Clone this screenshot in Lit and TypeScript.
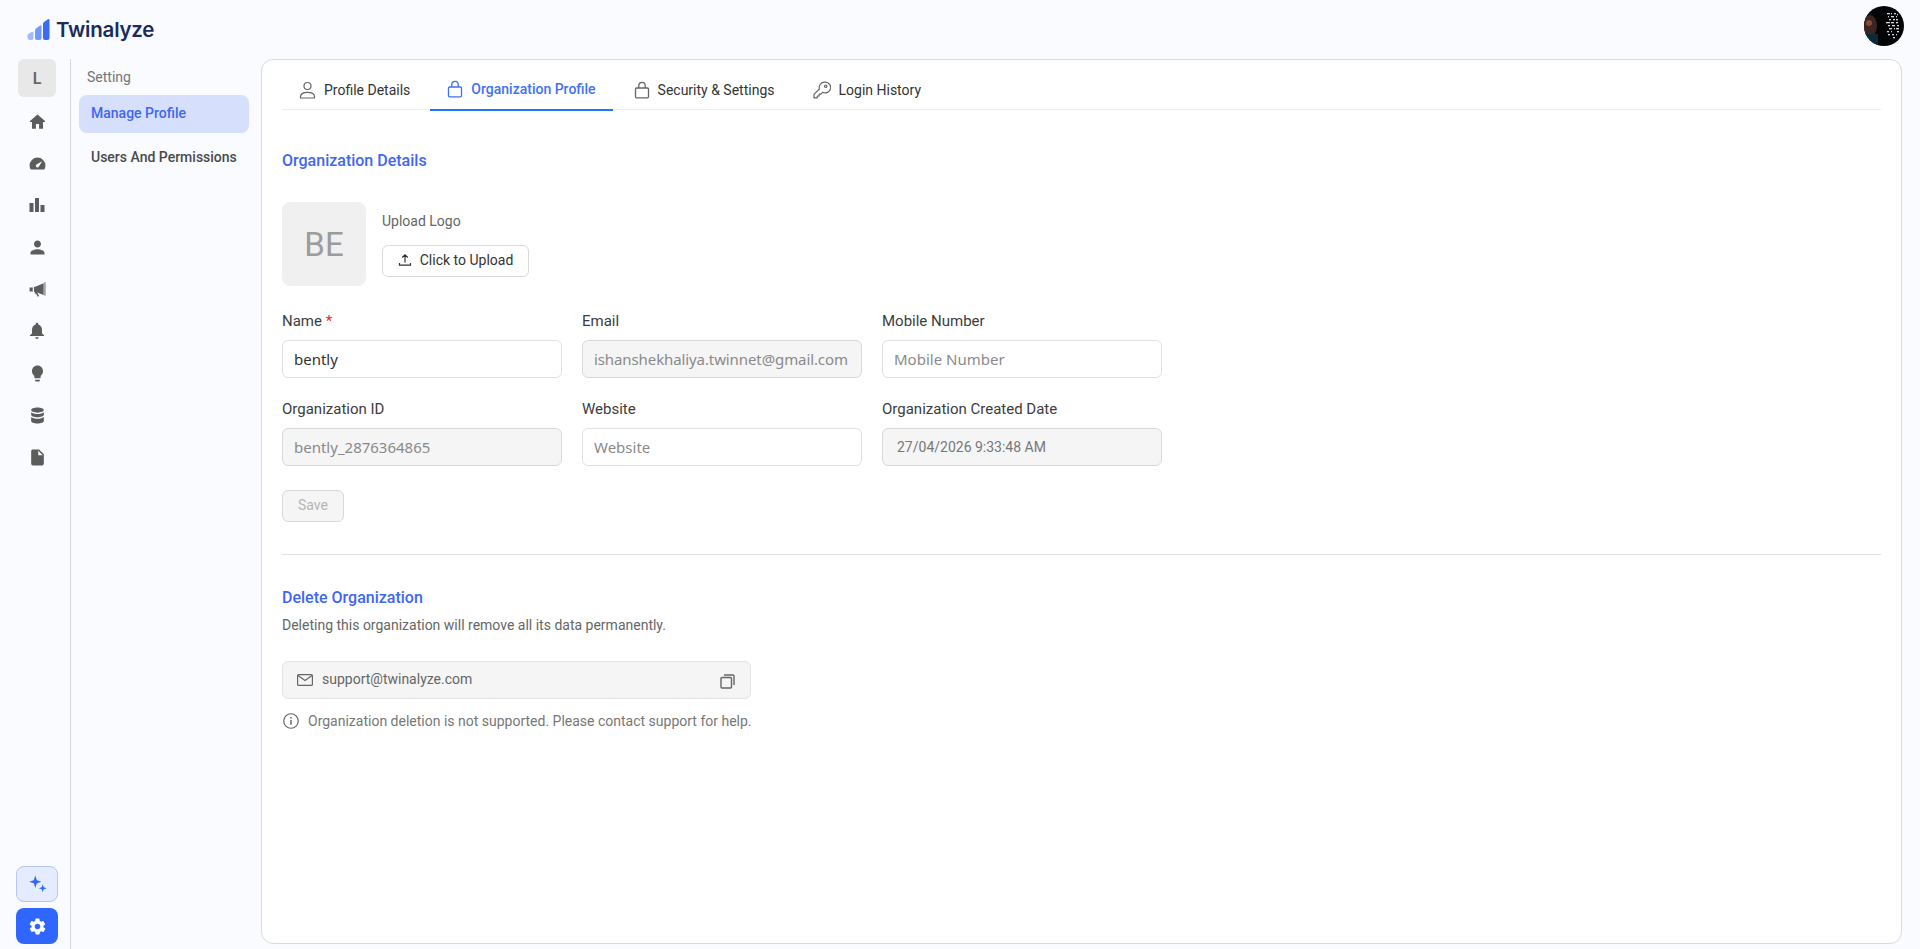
import { LitElement, html, css, svg } from "lit";
import { customElement } from "lit/decorators.js";

const railIcons = [
  { s: 19, d: "M12 3l9.500 8.500v1H19V21h-5v-6h-4v6H5v-8.500H2.500v-1z" },
  { s: 19, d: "M12 4.500a10 10 0 0 0-10 10c0 1.900.5 3.600 1.400 5h17.200c.9-1.400 1.400-3.100 1.400-5a10 10 0 0 0-10-10zm5.900 4.600l-4.300 6.900a2 2 0 1 1-2.900-2.700z" },
  { s: 24, d: "M4.500 10h4v9h-4zM10 5h4v14h-4zm5.500 7h4v7h-4z" },
  { s: 21, d: "M12 12c2.210 0 4-1.790 4-4s-1.790-4-4-4-4 1.790-4 4 1.790 4 4 4zm0 2c-2.670 0-8 1.340-8 4v2h16v-2c0-2.660-5.330-4-8-4z" },
  { s: 19, d: "M22 2.500v17l-1.200.3V3.200zM19.800 4v14.800L11.500 15.700V16.500h.6l1.900 3.800-1.700 1-2.100-3.900-1.700-.2V15l-1-.3V9.300zM2 9.500h4v5H2z" },
  { s: 20, d: "M12 21.500c1.100 0 2-.9 2-2h-4c0 1.100.9 2 2 2zm6-6.500v-4.500c0-3.070-1.640-5.640-4.500-6.320V3.500c0-.83-.67-1.500-1.500-1.500s-1.500.67-1.500 1.500v.68C7.630 4.860 6 7.420 6 10.500V15l-2.500 2v1h17v-1z" },
  { s: 19, d: "M9 21c0 .55.45 1 1 1h4c.55 0 1-.45 1-1v-1H9v1zm3-19C8.140 2 5 5.140 5 9c0 2.380 1.190 4.470 3 5.740V17c0 .55.45 1 1 1h6c.55 0 1-.45 1-1v-2.260c1.810-1.270 3-3.360 3-5.740 0-3.860-3.140-7-7-7z" },
  { s: 19, d: "M12 2C7.600 2 4 3.400 4 5.200S7.600 8.400 12 8.400s8-1.400 8-3.200S16.400 2 12 2zM4 8v3c0 1.800 3.600 3.200 8 3.200s8-1.400 8-3.200V8c-1.700 1.500-4.800 2.200-8 2.200S5.700 9.500 4 8zm0 6v4.800C4 20.600 7.600 22 12 22s8-1.400 8-3.200V14c-1.700 1.500-4.800 2.200-8 2.200S5.700 15.500 4 14z" },
  { s: 19, d: "M6 2c-1.100 0-1.990.9-1.990 2L4 20c0 1.100.89 2 1.990 2H18c1.100 0 2-.9 2-2V8l-6-6H6zm7 7V3.500L18.500 9H13z" },
];

const rail = (i: { s: number; d: string }) => html`
  <div class="rail-item">
    <svg width=${i.s} height=${i.s} viewBox="0 0 24 24" fill="currentColor"><path d=${i.d}></path></svg>
  </div>`;

const lock = html`<svg class="tab-ico" width="16" height="18" viewBox="0 0 16 18" fill="none" stroke="currentColor" stroke-width="1.300"><rect x="1.500" y="7" width="13" height="9.800" rx="1"></rect><path d="M4.800 7V4.500a3.200 3.200 0 0 1 6.400 0V7"></path></svg>`;
const person = html`<svg class="tab-ico" width="17" height="18" viewBox="0 0 17 18" fill="none" stroke="currentColor" stroke-width="1.200"><circle cx="8.500" cy="5" r="3.500"></circle><path d="M1.500 17v-1.500c0-2.700 3-4.200 7-4.200s7 1.500 7 4.200V17z"></path></svg>`;
const key = html`<svg class="tab-ico" width="18" height="18" viewBox="0 0 18 18" fill="none" stroke="currentColor" stroke-width="1.200" stroke-linejoin="round"><path d="M11.500 1.200a5.300 5.300 0 0 0-5.100 6.800L1 13.400v3.400h3.300v-1.800h1.800v-1.800h1.800l2-2a5.300 5.300 0 1 0 2.600-10z"></path><circle cx="12.700" cy="5.200" r="1.200"></circle></svg>`;

/* avatar: a dark photograph with small bright specks; drawn as abstract pixels */
const specks: [number, number, number][] = [
  [23,7,3],[27,7,1],[30,7,2],[33,8,1],[24,10,1],[27,10,3],[32,10,1],[25,13,2],[29,13,2],[32,13,2],[22,16,4],[27,16,3],[32,16,2],[24,19,2],[28,19,3],[33,19,2],[25,22,3],[30,22,1],[32,22,3],[23,25,2],[27,25,1],[33,25,2],[24,28,2],[28,28,2],[32,28,1],[29,31,2],
];
const avatar = html`<svg class="avatar" width="40" height="40" viewBox="0 0 40 40">
  <defs><clipPath id="av"><circle cx="20" cy="20" r="20"></circle></clipPath></defs>
  <g clip-path="url(#av)">
    <rect width="40" height="40" fill="#040507"></rect>
    <ellipse cx="6" cy="20" rx="7" ry="11" fill="#3a2520"></ellipse>
    <ellipse cx="5" cy="17" rx="3" ry="3" fill="#8a4a30"></ellipse>
    <rect x="0" y="28" width="14" height="12" fill="#0c2a3a"></rect>
    ${specks.map(([x, y, w]) => svg`<rect x=${x} y=${y} width=${w} height="1.300" fill="#d8d8d8"></rect>`)}
  </g>
</svg>`;

@customElement("app-root")
export class AppRoot extends LitElement {
  static styles = css`
    :host { display: flex; flex-direction: column; height: 100vh; background: #f9fbfe; font-family: Roboto, "Liberation Sans", sans-serif; font-size: 14px; color: #333; overflow: hidden; }
    * { box-sizing: border-box; }
    .top { height: 59px; flex: none; display: flex; align-items: center; justify-content: space-between; padding: 0 16px 0 27px; }
    .brand { display: flex; align-items: center; gap: 6px; }
    .brand-name { font-family: Inter, sans-serif; font-weight: 600; font-size: 20.500px; color: #1a2b5c; letter-spacing: -0.2px; line-height: 28px; }
    .avatar { display: block; margin-top: -7px; }
    .body { flex: 1; display: flex; min-height: 0; }
    .rail { width: 71px; flex: none; border-right: 1px solid #d3d6da; padding: 0 13px 5px 17px; display: flex; flex-direction: column; align-items: center; justify-content: space-between; }
    .rail-top { display: flex; flex-direction: column; align-items: center; gap: 4px; }
    .rail-l { width: 38px; height: 38px; margin-bottom: 1px; border-radius: 6px; background: #e8e8e8; color: #666; display: flex; align-items: center; justify-content: center; font-weight: 600; font-size: 16px; }
    .rail-item { width: 38px; height: 38px; display: flex; align-items: center; justify-content: center; color: #5c5c5c; }
    .rail-bottom { display: flex; flex-direction: column; gap: 6px; }
    .rb { width: 42px; height: 36px; border-radius: 8px; display: flex; align-items: center; justify-content: center; }
    .rb.spark { background: #e6ecff; border: 1px solid #b5c6f7; color: #2f66ff; }
    .rb.gear { background: #2f66ff; color: #fff; }
    .sub { width: 190px; flex: none; padding: 8px 12px 0 8px; }
    .sub-title { line-height: 20px; padding-left: 8px; color: #757575; margin-bottom: 8px; }
    .sub-item { height: 38px; border-radius: 8px; padding: 0 12px 2px; display: flex; align-items: center; font-weight: 500; color: #4a4a4a; margin-bottom: 6px; white-space: nowrap; }
    .sub-item.on { background: #d6e0fd; color: #3f66f5; }
    .card { flex: 1; margin: 0 18px 5px 0; background: #fff; border: 1px solid #d9dbde; border-radius: 12px; padding: 0 20px; min-width: 0; }
    .tabs { display: flex; gap: 4px; height: 50px; border-bottom: 1px solid #eeeeee; }
    .tab { height: 51px; padding: 9px 17px 0; display: flex; align-items: center; gap: 8px; color: #333; white-space: nowrap; }
    .tab:first-child { padding-right: 16px; }
    .tab-ico { color: #666; flex: none; }
    .tab.on { color: #3f72f5; border-bottom: 2px solid #1f75fe; font-weight: 500; }
    .tab.on .tab-ico { color: #3f72f5; }
    .title { font-size: 16px; font-weight: 500; line-height: 22px; color: #3f66f5; }
    .t1 { margin-top: 40px; margin-bottom: 30px; }
    .upload { display: flex; align-items: center; gap: 16px; margin-bottom: 24px; }
    .logo { width: 84px; height: 84px; border-radius: 8px; background: #f0f0f0; color: #9c9c9c; font-size: 33px; font-weight: 400; display: flex; align-items: center; justify-content: center; }
    .upload-label { font-size: 14px; line-height: 20px; color: #666; margin-bottom: 14px; }
    .btn { width: 147px; height: 32px; padding-bottom: 2px; border: 1px solid #d9d9d9; border-radius: 6px; background: #fff; display: flex; align-items: center; justify-content: center; gap: 8px; color: #333; font-size: 14px; }
    .form { display: grid; grid-template-columns: repeat(3, 280px); gap: 20px; }
    .f label { display: block; font-size: 15px; line-height: 20px; padding-top: 1px; height: 21px; margin-bottom: 9px; color: #3c3c3c; }
    .req { color: #f5222d; }
    .f input { display: block; width: 100%; height: 38px; border: 1px solid #e0e0e0; border-radius: 6px; padding: 0 11px; font-family: "Noto Sans", Roboto, sans-serif; font-size: 15px; color: #333; background: #fff; outline: none; }
    .f input::placeholder { color: #8a8a8a; opacity: 1; }
    .f input:disabled { background: #f5f5f5; color: #8a8a8a; border-color: #d9d9d9; }
    .f input.em { letter-spacing: -0.1px; }
    .f input.date { font-family: Roboto, sans-serif; font-size: 14px; padding: 0 14px 1px; color: #777; }
    .save { width: 62px; height: 32px; margin-top: 24px; padding-bottom: 2px; border: 1px solid #d9d9d9; border-radius: 6px; background: #f5f5f5; color: #b5b5b5; font-size: 14px; display: flex; align-items: center; justify-content: center; }
    .div { height: 1px; background: #e0e0e0; margin: 32px 0; }
    .desc { line-height: 20px; font-size: 14px; color: #666; margin-top: 6px; }
    .support { width: 469px; height: 38px; margin-top: 26px; background: #f5f5f5; border: 1px solid #e3e3e3; border-radius: 6px; padding: 0 15px 0 14px; display: flex; align-items: center; color: #666; }
    .support span { margin: 0 0 2px 9px; flex: 1; }
    .support .copy { margin-top: 3px; }
    .note { width: 469px; margin-top: 12px; line-height: 20px; display: flex; align-items: center; gap: 9px; color: #777; white-space: nowrap; }
    .note svg { flex: none; margin-left: 1px; }
  `;

  render() {
    return html`
      <header class="top">
        <div class="brand">
          <svg width="23" height="22" viewBox="0 0 23 22">
            <path d="M.5 17q0-1.500 1-2.200l3-1.800q2-1 2 1v5q0 2-2 2h-1q-3 0-3-3z" fill="#a0baff"></path>
            <path d="M8 11.500q0-1.200 1-2l4-3q1.500-1 1.500.8V19q0 2-2 2H10q-2 0-2-2z" fill="#7098ff"></path>
            <path d="M16 5q0-1.200 1-2l4-2.700q1.500-.8 1.500.8V19q0 2-2 2H18q-2 0-2-2z" fill="#3a6bf5"></path>
          </svg>
          <span class="brand-name">Twinalyze</span>
        </div>
        ${avatar}
      </header>
      <div class="body">
        <nav class="rail">
          <div class="rail-top">
            <div class="rail-l">L</div>
            ${railIcons.map(rail)}
          </div>
          <div class="rail-bottom">
            <div class="rb spark">
              <svg width="20" height="20" viewBox="0 0 20 20" fill="currentColor"><path d="M8.300 1.500l1.500 4.700 4.700 1.500-4.700 1.500-1.500 4.700-1.500-4.700L2.100 7.700l4.700-1.500zM15.700 10.300l1 3 3 1-3 1-1 3-1-3-3-1 3-1z"></path></svg>
            </div>
            <div class="rb gear">
              <svg width="19" height="19" viewBox="0 0 24 24" fill="currentColor"><path fill-rule="evenodd" d="M19.400 13c.1-.3.100-.7.100-1s0-.7-.1-1l2.100-1.600c.2-.2.200-.4.100-.6l-2-3.500c-.1-.2-.4-.3-.6-.2l-2.500 1c-.5-.4-1.100-.7-1.700-1l-.4-2.700c0-.2-.2-.4-.5-.4h-4c-.3 0-.5.200-.5.400l-.4 2.700c-.6.300-1.200.6-1.700 1l-2.500-1c-.2-.1-.5 0-.6.200l-2 3.500c-.1.200-.1.400.1.600L4.600 11c-.1.300-.1.700-.1 1s0 .7.100 1l-2.100 1.600c-.2.200-.2.400-.1.600l2 3.500c.1.200.4.300.6.200l2.500-1c.5.400 1.100.7 1.700 1l.4 2.700c0 .2.200.4.500.4h4c.3 0 .5-.2.500-.4l.4-2.700c.6-.3 1.200-.6 1.700-1l2.500 1c.2.100.5 0 .6-.2l2-3.500c.1-.2.100-.4-.1-.6zM12 15.500a3.500 3.500 0 1 1 0-7 3.500 3.500 0 0 1 0 7z"></path></svg>
            </div>
          </div>
        </nav>
        <aside class="sub">
          <div class="sub-title">Setting</div>
          <div class="sub-item on">Manage Profile</div>
          <div class="sub-item">Users And Permissions</div>
        </aside>
        <main class="card">
          <div class="tabs">
            <div class="tab">${person}Profile Details</div>
            <div class="tab on">${lock}Organization Profile</div>
            <div class="tab">${lock}Security &amp; Settings</div>
            <div class="tab">${key}Login History</div>
          </div>
          <div class="title t1">Organization Details</div>
          <div class="upload">
            <div class="logo">BE</div>
            <div>
              <div class="upload-label">Upload Logo</div>
              <div class="btn">
                <svg width="14" height="14" viewBox="0 0 14 14" fill="none" stroke="#333" stroke-width="1.200"><path d="M7 9.500V2M4.200 4.500L7 1.800l2.800 2.700M1.500 10v2.200h11V10"></path></svg>
                Click to Upload
              </div>
            </div>
          </div>
          <div class="form">
            <div class="f"><label>Name <span class="req">*</span></label><input .value=${"bently"} /></div>
            <div class="f"><label>Email</label><input class="em" disabled .value=${"ishanshekhaliya.twinnet@gmail.com"} /></div>
            <div class="f"><label>Mobile Number</label><input placeholder="Mobile Number" /></div>
            <div class="f"><label>Organization ID</label><input disabled .value=${"bently_2876364865"} /></div>
            <div class="f"><label>Website</label><input placeholder="Website" /></div>
            <div class="f"><label>Organization Created Date</label><input class="date" disabled .value=${"27/04/2026 9:33:48 AM"} /></div>
          </div>
          <div class="save">Save</div>
          <div class="div"></div>
          <div class="title">Delete Organization</div>
          <div class="desc">Deleting this organization will remove all its data permanently.</div>
          <div class="support">
            <svg width="16" height="12" viewBox="0 0 16 12" fill="none" stroke="#666" stroke-width="1.200"><rect x=".6" y=".6" width="14.800" height="10.800" rx="1"></rect><path d="M1 1.500l7 5 7-5"></path></svg>
            <span>support@twinalyze.com</span>
            <svg class="copy" width="15" height="15" viewBox="0 0 15 15" fill="none" stroke="#666" stroke-width="1.400"><rect x="1" y="3.500" width="10.500" height="10.500" rx="1"></rect><path d="M4 1h9a1 1 0 0 1 1 1v9"></path></svg>
          </div>
          <div class="note">
            <svg width="16" height="16" viewBox="0 0 15 15" fill="none" stroke="#666" stroke-width="1.100"><circle cx="7.500" cy="7.500" r="6.800"></circle><path d="M7.500 6.500v4.500" stroke-width="1.400"></path><circle cx="7.500" cy="4.500" r=".8" fill="#666" stroke="none"></circle></svg>
            Organization deletion is not supported. Please contact support for help.
          </div>
        </main>
      </div>
    `;
  }
}
